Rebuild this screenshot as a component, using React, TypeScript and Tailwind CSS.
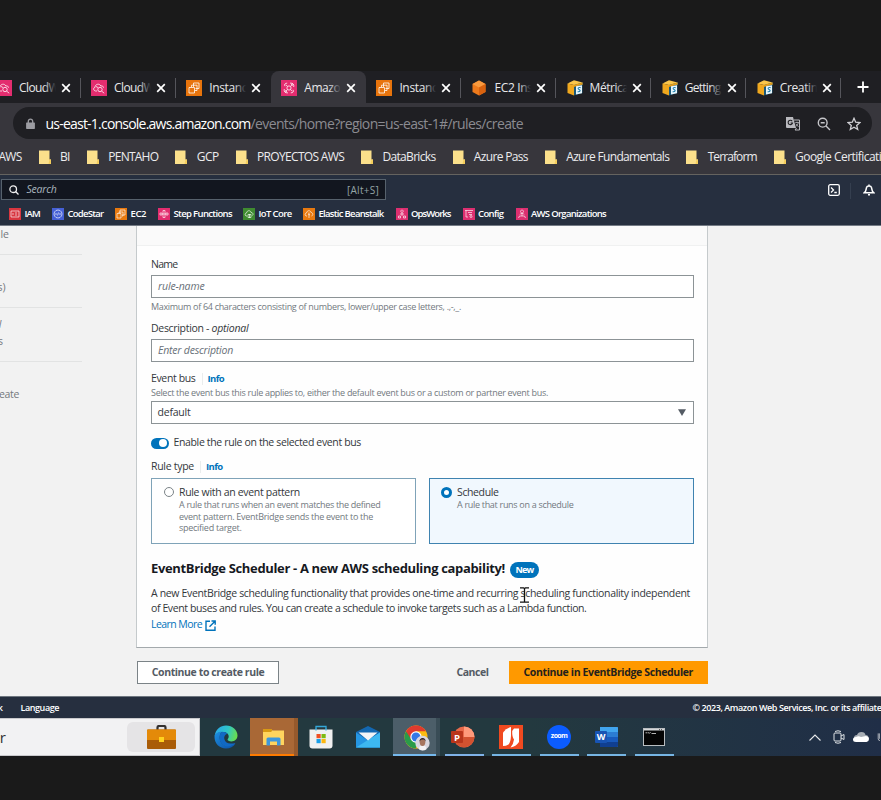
import { useLayoutEffect, useRef, useState, type ReactNode } from "react";

/* Text whose letter spacing is adjusted so it spans exactly `w` pixels. */
function Fit({ w, children, className = "" }: { w: number; children: string; className?: string }) {
  const ref = useRef<HTMLSpanElement>(null);
  const [spacing, setSpacing] = useState(0);
  useLayoutEffect(() => {
    if (ref.current) setSpacing((w - ref.current.getBoundingClientRect().width) / children.length);
  }, []);
  return (
    <span ref={ref} className={`inline-block shrink-0 whitespace-pre ${className}`} style={{ letterSpacing: `${spacing}px` }}>
      {children}
    </span>
  );
}

/* ---------- browser chrome ---------- */

type Favicon = "watch" | "ec2" | "bridge" | "cube" | "docs";

function TabIcon({ kind }: { kind: Favicon }) {
  if (kind === "cube")
    return (
      <svg viewBox="0 0 16 16" className="size-4 shrink-0">
        <path d="M8 .5 14.5 4v8L8 15.5 1.5 12V4z" fill="#ee7a1c" />
        <path d="M8 .5 14.5 4 8 7.6 1.5 4z" fill="#f99a3e" />
        <path d="M8 7.6 14.5 4v8L8 15.5z" fill="#d9620f" />
      </svg>
    );
  if (kind === "docs")
    return (
      <svg viewBox="0 0 16 16" className="size-4 shrink-0">
        <path d="M7 .3 15.5 2.500V5L7 5 .5 3.400z" fill="#fbc64a" />
        <path d="M.5 3.400 7 5v10.600L.5 13z" fill="#f0a81e" />
        <path d="M7 5l8.500-2.500V13L7 15.600z" fill="#1a5878" />
        <path d="M7 5l8.500-2.500v2L7 7z" fill="#e69d15" />
        <path d="M9 6.300l6-1v7.900l-6 1.300z" fill="#e8f6fb" />
        <path d="M13.600 7.600c-2.400-.6-3.300 1.200-1.500 2s1.200 2.400-1.500 2.100" fill="none" stroke="#1d7fae" strokeWidth="1.100" />
      </svg>
    );
  const bg = kind === "ec2" ? "#e8740c" : "#e32d6f";
  return (
    <svg viewBox="0 0 16 16" className="size-4 shrink-0" fill="none" stroke="#fff" strokeOpacity=".85" strokeWidth=".9">
      <rect width="16" height="16" fill={bg} stroke="none" />
      {kind === "ec2" && <path d="M3 7.500h5.500V13H3zM7.500 3H13v5.500H9.500M7.500 7V3M5.500 7V5.200H11v5.300H9" />}
      {kind === "watch" && (
        <>
          <path d="M6 11H4.500C2 10.500 2.200 7.600 4 7.400 4 4 8.500 3 9.800 6c1.800-.4 2.600.5 2.700 1.700" />
          <circle cx="9" cy="9.500" r="2.200" />
          <path d="m10.700 11.200 2.500 2M5 6.500l2 1" />
        </>
      )}
      {kind === "bridge" && (
        <>
          <circle cx="8" cy="8" r="2.100" />
          <path d="M4 6.200C3 4.500 4 3 6.200 3.200M12 9.800c1 1.700 0 3.200-2.200 3M9 3.200c2.500-.4 4.500 1.300 3.600 3.800M7 12.800c-2.500.4-4.500-1.300-3.600-3.800M6.500 6.500 5 4.800M9.500 9.500l1.500 1.700M9.700 6.400l1.200-1.600M6.300 9.600l-1.200 1.600" />
          <circle cx="11.300" cy="4.500" r=".8" />
          <circle cx="4.700" cy="11.500" r=".8" />
        </>
      )}
    </svg>
  );
}

function Close() {
  return (
    <svg viewBox="0 0 10 10" className="size-2.5 shrink-0" stroke="#fff" strokeWidth="1.700">
      <path d="m1.200 1.200 7.600 7.600M8.800 1.200 1.200 8.800" />
    </svg>
  );
}

const tabs: { kind: Favicon; label: string; w: number; active?: boolean; sep?: boolean }[] = [
  { kind: "watch", label: "CloudW", w: 40, sep: true },
  { kind: "watch", label: "CloudW", w: 40, sep: true },
  { kind: "ec2", label: "Instanc", w: 38 },
  { kind: "bridge", label: "Amazo", w: 36, active: true },
  { kind: "ec2", label: "Instanc", w: 38, sep: true },
  { kind: "cube", label: "EC2 Ins", w: 38, sep: true },
  { kind: "docs", label: "Métrica", w: 39, sep: true },
  { kind: "docs", label: "Getting", w: 36, sep: true },
  { kind: "docs", label: "Creatin", w: 38, sep: true },
];

function TabStrip() {
  return (
    <div className="flex h-8 bg-[#1f1f23]">
      <div className="-ml-[14.500px] flex shrink-0">
        {tabs.map((t, i) => (
          <div
            key={i}
            className={`flex h-8 w-[95.100px] shrink-0 items-center pt-px pl-[10.500px] ${t.active ? "rounded-t-lg bg-[#37363c]" : ""}`}
          >
            <TabIcon kind={t.kind} />
            <div className="relative ml-[7px] w-[37px] shrink-0 overflow-hidden text-xs leading-4 text-[#e8e8ea]">
              <Fit w={t.w}>{t.label}</Fit>
              <div className={`absolute inset-y-0 right-0 w-3 bg-gradient-to-r from-transparent ${t.active ? "to-[#37363c]" : "to-[#1f1f23]"}`} />
            </div>
            <div className="ml-[5px] flex shrink-0"><Close /></div>
            {t.sep && <div className="ml-auto h-5 w-px bg-[#55555b]" />}
          </div>
        ))}
      </div>
      <svg viewBox="0 0 12 12" className="mt-2.5 ml-[15.500px] size-3 shrink-0" stroke="#fff" strokeWidth="1.800">
        <path d="M6 .5v11M.5 6h11" />
      </svg>
    </div>
  );
}

function AddressBar() {
  return (
    <div className="h-9 bg-[#37363c] pt-1 pr-[9px] pl-[13px]">
      <div className="flex h-8 items-center rounded-full bg-[#1f1f23] pl-[13px]">
        <svg viewBox="0 0 8 10" className="h-[11px] w-[9px]">
          <path d="M2 4.500V3a2 2 0 0 1 4 0v1.500" fill="none" stroke="#9c9ca2" strokeWidth="1.200" />
          <rect y="4" width="8" height="6" rx=".6" fill="#9c9ca2" />
        </svg>
        <Fit w={205} className="ml-[10.500px] text-[14px] text-white">us-east-1.console.aws.amazon.com</Fit>
        <Fit w={272.500} className="text-[14px] text-[#8b8b91]">/events/home?region=us-east-1#/rules/create</Fit>
        <div className="mr-[11px] ml-auto flex items-center">
          <svg viewBox="0 0 14 14" className="mt-px size-3.5">
            <path d="M0 0h7l3 11H1a1 1 0 0 1-1-1z" fill="#b9b9be" />
            <path d="M8 3h5.500v10H9l1.500-2" fill="none" stroke="#b9b9be" strokeWidth="1" />
            <path d="M6.200 4.200A2.200 2.200 0 1 0 6.500 6H4.600" fill="none" stroke="#1f1f23" strokeWidth="1.100" />
            <path d="M9.300 5.500h3.500M11 4.700v.8M12.300 5.500c-.3 2-1.300 3-2.500 4M9.800 6.800l2.600 3" fill="none" stroke="#b9b9be" strokeWidth=".8" />
          </svg>
          <svg viewBox="0 0 14 14" className="mt-px ml-[17px] size-3.5" fill="none" stroke="#c6c6ca" strokeWidth="1.400">
            <circle cx="5.700" cy="5.700" r="4.400" />
            <path d="m9 9 4 4M3.700 5.700h4" />
          </svg>
          <svg viewBox="0 0 14 14" className="mt-px ml-4 size-3.5" fill="none" stroke="#d0d0d4" strokeWidth="1.300">
            <path d="m7 1.300 1.700 3.900 4.200.4-3.200 2.800 1 4.100L7 10.300l-3.700 2.200 1-4.100L1.100 5.600l4.200-.4z" />
          </svg>
        </div>
      </div>
    </div>
  );
}

const bookmarks = [
  { label: "BI", w: 10 },
  { label: "PENTAHO", w: 50 },
  { label: "GCP", w: 22 },
  { label: "PROYECTOS AWS", w: 87 },
  { label: "DataBricks", w: 53 },
  { label: "Azure Pass", w: 54 },
  { label: "Azure Fundamentals", w: 103 },
  { label: "Terraform", w: 49 },
  { label: "Google Certificatio", w: 93 },
];

function Bookmarks() {
  return (
    <div className="flex h-[35px] items-center overflow-hidden bg-[#37363c] text-xs text-[#ececee]">
      <Fit w={23} className="-ml-[1.500px]">AWS</Fit>
      {bookmarks.map((b) => (
        <div key={b.label} className="ml-[17.100px] flex shrink-0 items-center">
          <svg viewBox="0 0 12 14" className="mr-[9.300px] h-3.5 w-3">
            <path d="M0 .5h10.500v9H12V14H0z" fill="#fbe08b" />
            <path d="M10.500 9.500H12V14H9.500z" fill="#f4cd5c" />
          </svg>
          <Fit w={b.w}>{b.label}</Fit>
        </div>
      ))}
    </div>
  );
}

/* ---------- AWS navigation ---------- */

const services = [
  { label: "IAM", w: 15.5, gap: 0, bg: "bg-[#d8363f]", d: "M2 3h8v6H2zM4 5v2M6 5h2M6 7h2" },
  { label: "CodeStar", w: 36, gap: 12, bg: "bg-[#4560d6]", d: "M6 2a4 4 0 1 0 .01 0M4.500 5l-1 1 1 1M7.500 5l1 1-1 1M6.500 4.500l-1 3" },
  { label: "EC2", w: 15.5, gap: 11.5, bg: "bg-[#e8790f]", d: "M2 5.500h4V10H2zM5 5V2h5v5H7M4 5V4h4v4H7" },
  { label: "Step Functions", w: 58.5, gap: 12, bg: "bg-[#e32d6f]", d: "M5 2.500h2v7H5zM2 5h2v2H2zM8 5h2v2H8zM4 6h4" },
  { label: "IoT Core", w: 33, gap: 11, bg: "bg-[#3f8b30]", d: "M4 8H3C1.500 7 2 5 3.500 5c.5-3 4-3 4.500-.5 2 0 2.500 2 1.500 3M5 6.500h3v3H5zM6.500 6v4" },
  { label: "Elastic Beanstalk", w: 65, gap: 11.5, bg: "bg-[#e8790f]", d: "M4 8H3C1.500 7 2 5 3.500 5c.5-3 4-3 4.500-.5 2 0 2.500 3 .5 3.500M6 4.500V10M5 6l2 1" },
  { label: "OpsWorks", w: 39.5, gap: 12, bg: "bg-[#dd2f70]", d: "M6 2a1.200 1.200 0 1 0 .01 0M4 6h4M6 4.500V8M2.500 8h2v2h-2zM7.500 8h2v2h-2z" },
  { label: "Config", w: 25.5, gap: 12, bg: "bg-[#dd2f70]", d: "M2 2.500h8M3 2.500V9h2M5 4.500h4M6 6.500h3M7 8.500a1 1 0 1 0 2 0 1 1 0 0 0-2 0" },
  { label: "AWS Organizations", w: 75, gap: 12, bg: "bg-[#dd2f70]", d: "M6 2a1.500 1.500 0 1 0 .01 0M4 6.500C4 5 8 5 8 6.500M6 5.500V8M2.500 10l1-2h5l1 2" },
];

function AwsNav() {
  return (
    <header className="h-[51px] border-t border-[#65635f] bg-[#262f3f]">
      <div className="flex h-[28px] pt-1 pl-px">
        <div className="flex h-[21px] w-[385px] items-center border border-[#56616c] bg-[#12161f]">
          <svg viewBox="0 0 10 10" className="ml-[7px] size-2.5" fill="none" stroke="#f0f0f0" strokeWidth="1.300">
            <circle cx="4.200" cy="4.200" r="3.300" />
            <path d="m6.800 6.800 2.700 2.700" />
          </svg>
          <Fit w={30} className="ml-[7.500px] text-[10.500px] text-[#a9b5bd] italic">Search</Fit>
          <Fit w={32} className="mr-[6px] ml-auto pt-px text-[10px] text-[#95a5a6]">[Alt+S]</Fit>
        </div>
        <svg viewBox="0 0 12 12" className="mt-[5px] ml-[441.500px] size-3" fill="none" stroke="#fff" strokeWidth="1.300">
          <rect x=".7" y=".7" width="10.600" height="10.600" rx="1.500" />
          <path d="M3 3.500 5.500 6 3 8.500M6.300 8.500h2.500" />
        </svg>
        <div className="mt-1 ml-2.5 h-4 w-px bg-[#353f4f]" />
        <svg viewBox="0 0 12 12" className="mt-[5px] ml-3 size-3" fill="none" stroke="#fff" strokeWidth="1.500">
          <path d="M1.200 8.800C3.500 7 3 5 3.500 3.500 4 1.600 8 1.600 8.500 3.500 9 5 8.500 7 10.800 8.800zM5 10.800h2M6 .5v1" />
        </svg>
      </div>
      <nav className="flex h-[21px] items-center pt-px pl-[9px] text-[9.500px] font-semibold text-white">
        {services.map((s) => (
          <div key={s.label} className="flex shrink-0 items-center">
            <div style={{ width: s.gap }} />
            <svg viewBox="0 0 12 12" className={`mr-[3.500px] size-3 ${s.bg}`} fill="none" stroke="#fff" strokeOpacity=".8" strokeWidth=".8">
              <path d={s.d} />
            </svg>
            <Fit w={s.w}>{s.label}</Fit>
          </div>
        ))}
      </nav>
    </header>
  );
}

/* ---------- page ---------- */

function Steps() {
  return (
    <aside className="w-[136px] shrink-0 text-[10.500px] leading-4 text-[#75797d]">
      <div className="flex h-[28.500px] w-[82px] border-b border-[#e2e3e3]">
        <span className="flex w-[9px] justify-end whitespace-nowrap">ule</span>
      </div>
      <div className="flex h-[53.500px] w-[82px] border-b border-[#e2e3e3] pt-[24.500px]">
        <span className="flex w-[5.500px] justify-end whitespace-nowrap">s)</span>
      </div>
      <div className="h-[53.500px] w-[82px] border-b border-[#e2e3e3] pt-2">
        <span className="flex w-[1.500px] justify-end whitespace-nowrap italic">l</span>
        <span className="mt-px flex w-[3px] justify-end whitespace-nowrap">s</span>
      </div>
      <div className="pt-[24.500px]">
        <span className="flex w-[19px] justify-end whitespace-nowrap"><Fit w={24}>reate</Fit></span>
      </div>
    </aside>
  );
}

function InfoLink() {
  return (
    <>
      <div className="ml-[6px] h-3 w-px bg-[#eaeded]" />
      <Fit w={16.500} className="ml-[5px] pt-px text-[9.500px] font-bold text-[#0073bb]">Info</Fit>
    </>
  );
}

function Row({ className, children }: { className: string; children: ReactNode }) {
  return <div className={`flex items-center ${className}`}>{children}</div>;
}

function RuleForm() {
  return (
    <section className="h-[422px] w-[572px] border border-t-0 border-[#c5cacc] border-b-[#a3a9ac] bg-[#fefefe] text-[10.500px] text-[#33373b]">
      <div className="h-5 border-b border-[#f0f1f1] bg-[#fafafa]" />
      <div className="w-[557px] pt-2.5 pl-[14px]">
        <Row className="h-4 pt-[1.500px]"><Fit w={26.500}>Name</Fit></Row>
        <Row className="mt-[3px] h-[23px] border border-[#8c9396] bg-white pt-px pl-[6px] text-[#687078] italic">
          <Fit w={46.500}>rule-name</Fit>
        </Row>
        <Row className="mt-px h-4 text-[9px] text-[#727980]">
          <Fit w={310}>Maximum of 64 characters consisting of numbers, lower/upper case letters, .,-,_.</Fit>
        </Row>
        <Row className="mt-[5px] h-4 pt-[1.500px]">
          <Fit w={60.500}>Description - </Fit>
          <Fit w={37} className="italic">optional</Fit>
        </Row>
        <Row className="mt-[3px] h-[23px] border border-[#8c9396] bg-white pt-px pl-[6px] text-[#687078] italic">
          <Fit w={75}>Enter description</Fit>
        </Row>
        <Row className="mt-2.5 h-[13px]">
          <Fit w={44.500}>Event bus</Fit>
          <InfoLink />
        </Row>
        <Row className="h-3.5 pt-px text-[9px] text-[#727980]">
          <Fit w={397}>Select the event bus this rule applies to, either the default event bus or a custom or partner event bus.</Fit>
        </Row>
        <Row className="mt-[2px] h-[23px] justify-between border border-[#8c9396] bg-white pr-[7px] pl-[5.500px]">
          <Fit w={33}>default</Fit>
          <svg viewBox="0 0 8 7" className="h-[7px] w-2"><path d="M0 .3h8L4 7z" fill="#545b64" /></svg>
        </Row>
        <Row className="mt-[11px] h-4">
          <div className="flex h-[11px] w-[17.500px] justify-end rounded-full bg-[#0073bb] p-[1.500px]">
            <div className="size-2 rounded-full bg-white" />
          </div>
          <Fit w={187.500} className="ml-[5px]">Enable the rule on the selected event bus</Fit>
        </Row>
        <Row className="mt-2 h-[15px] pt-px">
          <Fit w={43}>Rule type</Fit>
          <InfoLink />
        </Row>
        <div className="mt-1 flex gap-[13px]">
          <div className="flex h-[66px] w-[265px] border border-[#7fa3b8] bg-white pt-[7px] pl-[11.500px]">
            <div className="mt-px size-2.5 shrink-0 rounded-full border border-[#7c8488] bg-white" />
            <div className="ml-[5.500px] flex flex-col items-start">
              <Fit w={121} className="h-[13px] leading-[13px]">Rule with an event pattern</Fit>
              <div className="flex flex-col items-start text-[9px] leading-[11.600px] text-[#727980]">
                <Fit w={201.500}>A rule that runs when an event matches the defined</Fit>
                <Fit w={194}>event pattern. EventBridge sends the event to the</Fit>
                <Fit w={62.500}>specified target.</Fit>
              </div>
            </div>
          </div>
          <div className="flex h-[66px] w-[265px] border border-[#3f83b0] bg-[#f1f8fe] pt-[7px] pl-[11px]">
            <div className="mt-px size-[11px] shrink-0 rounded-full border-[3.500px] border-[#0073bb] bg-white" />
            <div className="ml-[5px] flex flex-col items-start">
              <Fit w={41.500} className="h-[13px] leading-[13px]">Schedule</Fit>
              <Fit w={116.500} className="text-[9px] leading-[11.600px] text-[#727980]">A rule that runs on a schedule</Fit>
            </div>
          </div>
        </div>
        <Row className="mt-3.5 h-[22px] font-bold text-[#16191f]">
          <Fit w={354} className="text-[13px]">EventBridge Scheduler - A new AWS scheduling capability!</Fit>
          <div className="mt-[2px] ml-[5px] flex h-4 w-[29px] items-center justify-center rounded-full bg-[#0073bb] text-[9px] text-white">
            <Fit w={18}>New</Fit>
          </div>
        </Row>
        <div className="relative mt-[5.500px] flex flex-col items-start leading-[15.700px]">
          <Fit w={539}>A new EventBridge scheduling functionality that provides one-time and recurring scheduling functionality independent</Fit>
          <Fit w={435.500}>of Event buses and rules. You can create a schedule to invoke targets such as a Lambda function.</Fit>
          <div className="flex items-center text-[#0073bb]">
            <Fit w={51}>Learn More</Fit>
            <svg viewBox="0 0 11 11" className="mt-px ml-[3px] size-[11px]" fill="none" stroke="currentColor" strokeWidth="1.400">
              <path d="M5 1.200H1v9h9V6.500M6.500 1h3.700v3.700M10 1.200 4.500 6.700" />
            </svg>
          </div>
          <svg viewBox="0 0 9 16" className="absolute top-[1.500px] left-[369px] h-4 w-[9px]" fill="none" stroke="#111" strokeWidth="1.300">
            <path d="M0 .8h3.500l1 .8 1-.8H9M4.500 1v14M0 15.200h3.500l1-.8 1 .8H9" />
          </svg>
        </div>
      </div>
    </section>
  );
}

function Page() {
  return (
    <div className="flex h-[470px] bg-[#f2f2f2]">
      <Steps />
      <main className="shrink-0">
        <RuleForm />
        <div className="mt-[13px] ml-px flex h-[23px] w-[571px] items-center text-[10.500px] font-bold text-[#545b64]">
          <button className="flex h-[23px] w-[142px] items-center justify-center border border-[#7b8387] bg-white">
            <Fit w={112.500}>Continue to create rule</Fit>
          </button>
          <Fit w={32} className="mr-5 ml-auto">Cancel</Fit>
          <button className="flex h-[23px] w-[199.500px] items-center justify-center bg-[#ff9900] text-[#24211d]">
            <Fit w={169.500}>Continue in EventBridge Scheduler</Fit>
          </button>
        </div>
      </main>
    </div>
  );
}

function Footer() {
  return (
    <footer className="flex h-[22px] items-center overflow-hidden border-t border-[#6f7780] bg-[#262f3f] text-[9px] font-semibold text-white">
      <span className="flex w-[3px] justify-end">k</span>
      <Fit w={38.500} className="ml-[17.500px]">Language</Fit>
      <Fit w={195} className="ml-[633.500px]">© 2023, Amazon Web Services, Inc. or its affiliates.</Fit>
    </footer>
  );
}

/* ---------- Windows taskbar ---------- */

function Edge() {
  return (
    <svg viewBox="0 0 24 24" className="ml-0.5 size-6">
      <defs>
        <linearGradient id="edgeTop" x1="0" x2="1" y1=".3" y2=".5">
          <stop offset="0" stopColor="#2aa7e8" />
          <stop offset=".55" stopColor="#2fc6c8" />
          <stop offset="1" stopColor="#6ade4b" />
        </linearGradient>
        <linearGradient id="edgeLow" x1="0" x2="1" y1="0" y2="1">
          <stop offset="0" stopColor="#1c8fe0" />
          <stop offset="1" stopColor="#0c4fa5" />
        </linearGradient>
      </defs>
      <path d="M.6 11C1.500 4.500 6.500.5 12 .5c6.500 0 11.500 4.800 11.500 10 0 3.700-2.800 5.900-6 5.900-2.600 0-3.900-1-3.900-1.900 0-.7 1.100-1.200 1.100-3C14.700 9 12.500 7 9 7 4.500 7 1.800 9.200.6 11z" fill="url(#edgeTop)" />
      <path d="M.5 12C.5 8.500 4.500 6.500 8.500 6.800 6.500 8 5.700 10 5.700 12.500c0 4.500 3.300 8.500 8 8.500 3.500 0 6-1.200 7.600-2.500C19.500 21.700 16 23.500 12 23.500 5.500 23.500.5 18.500.5 12z" fill="url(#edgeLow)" />
      <path d="M8.500 6.800c2 .1 3.700.7 4.800 2-2.300.6-3.500 3-3 5.200.7 3.300 4 5 7.500 4.500 1.500-.2 2.700-.7 3.500 0-1.600 1.800-4.100 2.900-7.600 2.900-4.700 0-8.200-4.200-8.200-8.700 0-2.700 1-4.800 3-5.900z" fill="#1169c4" />
    </svg>
  );
}

function Explorer() {
  return (
    <svg viewBox="0 0 21 17" className="ml-[5px] h-[17px] w-[21px]">
      <path d="M0 .5h8l1.500 1H21V16H0z" fill="#ffd45e" />
      <path d="M0 0h9v2l-1 1H0z" fill="#d99a14" />
      <path d="M3.500 16.500V10q0-1.500 1.500-1.500h11q1.500 0 1.500 1.500v6.500H14v-4H7v4z" fill="#3e97dc" />
    </svg>
  );
}

function Store() {
  return (
    <svg viewBox="0 0 24 24" className="size-6">
      <path d="M7 5V1.500h10V5" fill="none" stroke="#35a8d8" strokeWidth="1.300" />
      <path d="M.5 4.500h23v16q0 3-3 3h-17q-3 0-3-3z" fill="#f0f0f0" />
      <path d="M7 3.500v2M17 3.500v2" stroke="#35a8d8" strokeWidth="1.300" />
      <path d="M7.500 9h4.200v4.200H7.500z" fill="#f04f23" />
      <path d="M12.500 9h4.200v4.200h-4.200z" fill="#7dba10" />
      <path d="M7.500 14h4.200v4.200H7.500z" fill="#1a9fe8" />
      <path d="M12.500 14h4.200v4.200h-4.200z" fill="#fcb710" />
    </svg>
  );
}

function Mail() {
  return (
    <svg viewBox="0 0 24 22" className="h-[22px] w-6">
      <path d="M12 0 24 6v15.500H0V6z" fill="#1367b0" />
      <path d="M0 6.500l12 8 12-8v15H0z" fill="#2596e3" />
      <path d="M24 21.500H0L24 6.500z" fill="#3db8f1" />
      <path d="M2.500 6.500h19L12 14.500z" fill="#f2f4f7" />
    </svg>
  );
}

function Chrome() {
  return (
    <svg viewBox="0 0 26 26" className="-mb-px ml-[7px] size-[26px]">
      <circle cx="12" cy="12" r="11.500" fill="#fbbc12" />
      <path d="M12 12 2 6.300A11.500 11.500 0 0 0 11.500 23.500l5-8.500z" fill="#2a9b49" />
      <path d="M2 6.300A11.500 11.500 0 0 1 22 6.300H12L7 14z" fill="#e03a2e" />
      <circle cx="12" cy="12" r="5.700" fill="#fff" />
      <circle cx="12" cy="12" r="4.500" fill="#3478e5" />
      <circle cx="18.500" cy="18" r="7.200" fill="#d9d6df" />
      <path d="M15 24.300c0-3 1.500-4 3.500-4s4 1 4 4a7 7 0 0 1-7.500 0z" fill="#f4f2f6" />
      <ellipse cx="18.500" cy="17.300" rx="2.800" ry="3.700" fill="#a77560" />
      <path d="M15.500 17c-.6-5 6.600-5.500 6.300 0-.5-2-1.500-2.500-3-2.500s-2.800.5-3.300 2.500z" fill="#2b2329" />
    </svg>
  );
}

function PowerPoint() {
  return (
    <svg viewBox="0 0 24 22" className="h-[22px] w-6">
      <circle cx="13" cy="11" r="10.500" fill="#e8694a" />
      <path d="M13 .5A10.500 10.500 0 0 1 23.500 11H13z" fill="#ff9a7b" />
      <path d="M23.500 11a10.500 10.500 0 0 1-20.500 3L13 11z" fill="#d35230" />
      <rect y="5" width="12" height="12" rx="1" fill="#b9361c" />
      <text x="6" y="14.500" textAnchor="middle" fontSize="9.500" fontWeight="700" fill="#fff">P</text>
    </svg>
  );
}

function Nitro() {
  return (
    <svg viewBox="0 0 24 24" className="size-6">
      <rect width="24" height="24" fill="#f04a20" />
      <path d="M4 21V7.500Q7 3 12 2v9q-.3 6-2.500 8.500Q7 21 4 21z" fill="#fff" />
      <path d="M20 3.500V17q-3 4.500-8.500 5.500Q14.500 19 15 14.500 13 12 13.200 6L15 3.500z" fill="#fff" />
    </svg>
  );
}

function Zoom() {
  return (
    <div className="ml-px flex size-6 items-center justify-center rounded-full bg-[#0b5cff] pb-0.5 text-[7px] font-bold text-white">
      <Fit w={16.500}>zoom</Fit>
    </div>
  );
}

function Word() {
  return (
    <svg viewBox="0 0 23 20" className="h-5 w-[23px]">
      <rect x="5" width="18" height="20" rx="1" fill="#2b7cd3" />
      <path d="M5 0h17q1 0 1 1v4H5z" fill="#41a5ee" />
      <path d="M5 10h18v5H5z" fill="#185abd" />
      <path d="M5 15h18v4q0 1-1 1H5z" fill="#103f91" />
      <rect y="4" width="12" height="12" rx="1" fill="#1854b4" />
      <text x="6" y="13.300" textAnchor="middle" fontSize="9" fontWeight="700" fill="#fff">W</text>
    </svg>
  );
}

function Terminal() {
  return (
    <svg viewBox="0 0 22 18" className="-mt-px h-[18px] w-[22px]">
      <rect x=".5" y=".5" width="21" height="17" fill="#050505" stroke="#b9bdc0" />
      <path d="M1 1h20v1.500H1z" fill="#d5d8da" />
      <path d="M2.500 4.800h2M5 4.800h1M6.500 5.500l1-1.500M8.500 5.500h4.500" stroke="#c8c8c8" strokeWidth=".9" />
      <path d="M16 1.700h1M18 1.700h1" stroke="#444" />
    </svg>
  );
}

const apps: { icon: ReactNode; bg: string; bar: string }[] = [
  { icon: <Explorer />, bg: "bg-[#a96836] border-r-4 border-[#95592c]", bar: "w-full bg-[#ff7b00]" },
  { icon: <Store />, bg: "", bar: "" },
  { icon: <Mail />, bg: "", bar: "" },
  { icon: <Chrome />, bg: "bg-[#4c5e69] border-r-4 border-[#394c56]", bar: "w-full bg-[#76b9ed]" },
  { icon: <PowerPoint />, bg: "", bar: "w-[39px] bg-[#7fb2e8]" },
  { icon: <Nitro />, bg: "", bar: "w-[39px] bg-[#76b5e4]" },
  { icon: <Zoom />, bg: "", bar: "w-[39px] bg-[#76b5e4]" },
  { icon: <Word />, bg: "", bar: "w-[39px] bg-[#76b5e4]" },
  { icon: <Terminal />, bg: "", bar: "w-[39px] bg-[#76b5e4]" },
];

function Taskbar() {
  return (
    <div className="flex h-[38px] overflow-hidden bg-gradient-to-r from-[#23393f] from-60% to-[#202e47]">
      <div className="flex h-[38px] w-[199.500px] shrink-0 items-center border-y border-r border-[#c9c9cc] bg-[#f2f2f3]">
        <span className="flex w-1.5 justify-end text-[15px] text-[#333]">ar</span>
        <div className="ml-[121px] flex h-[30px] w-[68px] items-center justify-center rounded-md bg-[#e5e4e6]">
          <svg viewBox="0 0 29 24" className="h-6 w-[29px]">
            <path d="M10.500 5V2.500q0-1.500 1.500-1.500h5q1.500 0 1.500 1.500V5" fill="none" stroke="#33302f" strokeWidth="2.200" />
            <rect y="4.500" width="29" height="19.500" rx="1" fill="#a95c08" />
            <path d="M0 5.500q0-1 1-1h27q1 0 1 1V15H0z" fill="#e48a09" />
            <rect x="12" y="12" width="5" height="5" fill="#ffd21f" />
          </svg>
        </div>
      </div>
      <div className="flex w-[50.500px] shrink-0 items-center justify-center bg-[#22383f]"><Edge /></div>
      {apps.map((a, i) => (
        <div key={i} className={`flex w-[47.600px] shrink-0 flex-col items-center ${a.bg}`}>
          <div className="flex h-9 items-center pt-0.5 pr-[1.500px]">{a.icon}</div>
          <div className={`h-0.5 ${a.bar}`} />
        </div>
      ))}
      <div className="mr-px ml-auto flex shrink-0 items-center">
        <svg viewBox="0 0 12 7" className="h-[7px] w-3" fill="none" stroke="#e8eaec" strokeWidth="1.100"><path d="M.5 6.500 6 1l5.500 5.500" /></svg>
        <svg viewBox="0 0 12 14" className="ml-3 h-3.5 w-3" fill="none" stroke="#dfe3e6" strokeWidth="1">
          <rect x="1" y="3" width="7" height="8" rx="1" />
          <path d="m8 6 3-1.500v5L8 8M2 1.500Q5 0 8 1.500M2 12.500Q5 14 8 12.500" />
        </svg>
        <svg viewBox="0 0 16 10" className="ml-2 h-2.5 w-4">
          <path d="M1 6Q1 3 4 3q1-3 4.500-3Q12 0 12.500 3q3 0 3 3z" fill="#a7adb4" />
          <path d="M3 10Q0 10 0 7.500T3 5q2.500-1.500 5 0l5-1q3 .5 3 3t-2.500 3z" fill="#fff" />
        </svg>
        <svg viewBox="0 0 5 14" className="ml-2 h-3.5 w-[3px]" fill="none" stroke="#fff"><path d="M2 1v9q0 3 3 3M4 1v9" /></svg>
      </div>
    </div>
  );
}

export default function App() {
  return (
    <div className="h-[800px] w-[881px] overflow-hidden bg-[#1a1a1a] font-['Open_Sans','Noto_Sans',sans-serif]">
      <div className="h-[71px]" />
      <TabStrip />
      <AddressBar />
      <Bookmarks />
      <AwsNav />
      <div className="h-px bg-[#747b85]" />
      <Page />
      <Footer />
      <Taskbar />
    </div>
  );
}
